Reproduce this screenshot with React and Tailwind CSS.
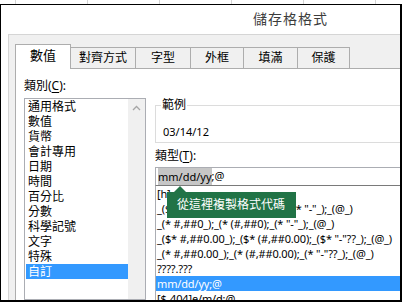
import React from "react";

const FONT = { fontFamily: '"Noto Sans", "Noto Sans CJK TC", sans-serif' };

const categories = [
  "通用格式",
  "數值",
  "貨幣",
  "會計專用",
  "日期",
  "時間",
  "百分比",
  "分數",
  "科學記號",
  "文字",
  "特殊",
  "自訂",
];

const codes = [
  "[h]:mm:ss",
  '_($* #,##0_);_($* (#,##0);_($* "-"_);_(@_)',
  '_(* #,##0_);_(* (#,##0);_(* "-"_);_(@_)',
  '_($* #,##0.00_);_($* (#,##0.00);_($* "-"??_);_(@_)',
  '_(* #,##0.00_);_(* (#,##0.00);_(* "-"??_);_(@_)',
  "????.???",
  "mm/dd/yy;@",
  "[$-404]e/m/d;@",
];

const tabs = [
  { label: "對齊方式", w: "w-[65px]" },
  { label: "字型", w: "w-[55px]" },
  { label: "外框", w: "w-[53px]" },
  { label: "填滿", w: "w-[54px]" },
  { label: "保護", w: "w-[52px]" },
];

export default function App() {
  return (
    <div
      className="w-[402px] h-[302px] overflow-hidden bg-white flex flex-col text-black"
      style={FONT}
    >
      {/* sheet grid strip behind the dialog */}
      <div className="h-[4px] shrink-0 flex">
        <div className="w-[15px] shrink-0" />
        {[0, 1, 2, 3, 4, 5].map((i) => (
          <div key={i} className="w-[72px] shrink-0 border-l border-[#d4d4d4]" />
        ))}
      </div>

      {/* dialog window */}
      <div className="flex-1 min-h-0 flex flex-col border-t border-l border-r-2 border-b-2 border-black bg-white overflow-hidden">
        <div className="h-[29px] shrink-0 pl-[252px] pt-[5px] text-[14px] leading-[18px] tracking-[1px] text-[#3c3c3c]">
          儲存格格式
        </div>

        <div className="flex-1 min-h-0 ml-[7px] border-t border-l border-[#d5d5d5] bg-[#f0f0f0] pl-[6px] pt-[9px] flex flex-col">
          {/* tabs */}
          <div className="h-[25px] shrink-0 flex items-end text-[12px]">
            <div className="w-[56px] h-[25px] shrink-0 border-l border-t border-r border-[#adadad] bg-white flex items-center justify-center pb-[2px] text-[13px]">
              數值
            </div>
            {tabs.map((t) => (
              <div
                key={t.label}
                className={`${t.w} h-[22px] shrink-0 border-t border-r border-b border-[#adadad] bg-[#f0f0f0] flex items-center justify-center`}
              >
                {t.label}
              </div>
            ))}
            <div className="flex-1 h-px bg-[#adadad]" />
          </div>

          {/* panel */}
          <div className="flex-1 min-h-0 border-l border-[#adadad] bg-white flex pl-[8px] pt-[9px] text-[12px]">
            {/* left: categories */}
            <div className="w-[122px] shrink-0 flex flex-col">
              <div className="h-[16px] leading-[16px]">
                類別(<span className="underline underline-offset-2">C</span>):
              </div>
              <div className="mt-[4px] flex-1 border border-[#abadb3] flex">
                <div className="flex-1 flex flex-col">
                  {categories.map((c) => (
                    <div
                      key={c}
                      className={`h-[15px] leading-[15px] ml-px pl-[2px] ${
                        c === "自訂" ? "bg-[#3399ff] text-white" : ""
                      }`}
                    >
                      {c}
                    </div>
                  ))}
                </div>
                <div className="w-[17px] shrink-0 bg-[#f0f0f0] flex justify-center pt-[6px]">
                  <svg width="9" height="6" viewBox="0 0 9 6">
                    <polyline
                      points="1,5 4.5,1.5 8,5"
                      fill="none"
                      stroke="#a6a6a6"
                      strokeWidth="1.3"
                    />
                  </svg>
                </div>
              </div>
            </div>

            {/* right: sample & type */}
            <div className="w-[260px] shrink-0 ml-[9px] flex flex-col">
              <fieldset className="mt-[19px] border border-[#dcdcdc]">
                <legend className="ml-[5px] px-[1px] h-[16px] leading-[16px]">範例</legend>
                <div className="mt-[11px] mb-[2px] h-[16px] leading-[16px] pl-[7px] text-[11px]">
                  03/14/12
                </div>
              </fieldset>

              <div className="mt-[5px] h-[16px] leading-[16px]">
                類型(<span className="underline underline-offset-2">T</span>):
              </div>

              <div className="mt-[3px] h-[24px] border border-[#abadb3] border-b-[#7a7a7a] pl-[2px] flex items-center text-[11px]">
                <span className="bg-[#c6c6c6] leading-[17px]">mm/dd/yy</span>
                <span>;@</span>
              </div>

              <div className="relative flex-1 border-l border-[#abadb3] text-[11px] tracking-[-0.15px]">
                {codes.map((c) => (
                  <div
                    key={c}
                    className={`h-[15px] leading-[15px] pl-px whitespace-nowrap ${
                      c === "mm/dd/yy;@" ? "bg-[#3399ff] text-white" : ""
                    }`}
                  >
                    {c}
                  </div>
                ))}

                {/* callout */}
                <div className="absolute left-[11px] top-[6px] w-[129px] h-[26px] bg-[#217346] text-white text-[12px] leading-[26px] pl-[10px] tracking-normal whitespace-nowrap">
                  <div className="absolute -top-[6px] left-[7px] w-0 h-0 border-l-[6px] border-r-[6px] border-b-[6px] border-l-transparent border-r-transparent border-b-[#217346]" />
                  從這裡複製格式代碼
                </div>
              </div>
            </div>
          </div>
        </div>
      </div>
    </div>
  );
}
